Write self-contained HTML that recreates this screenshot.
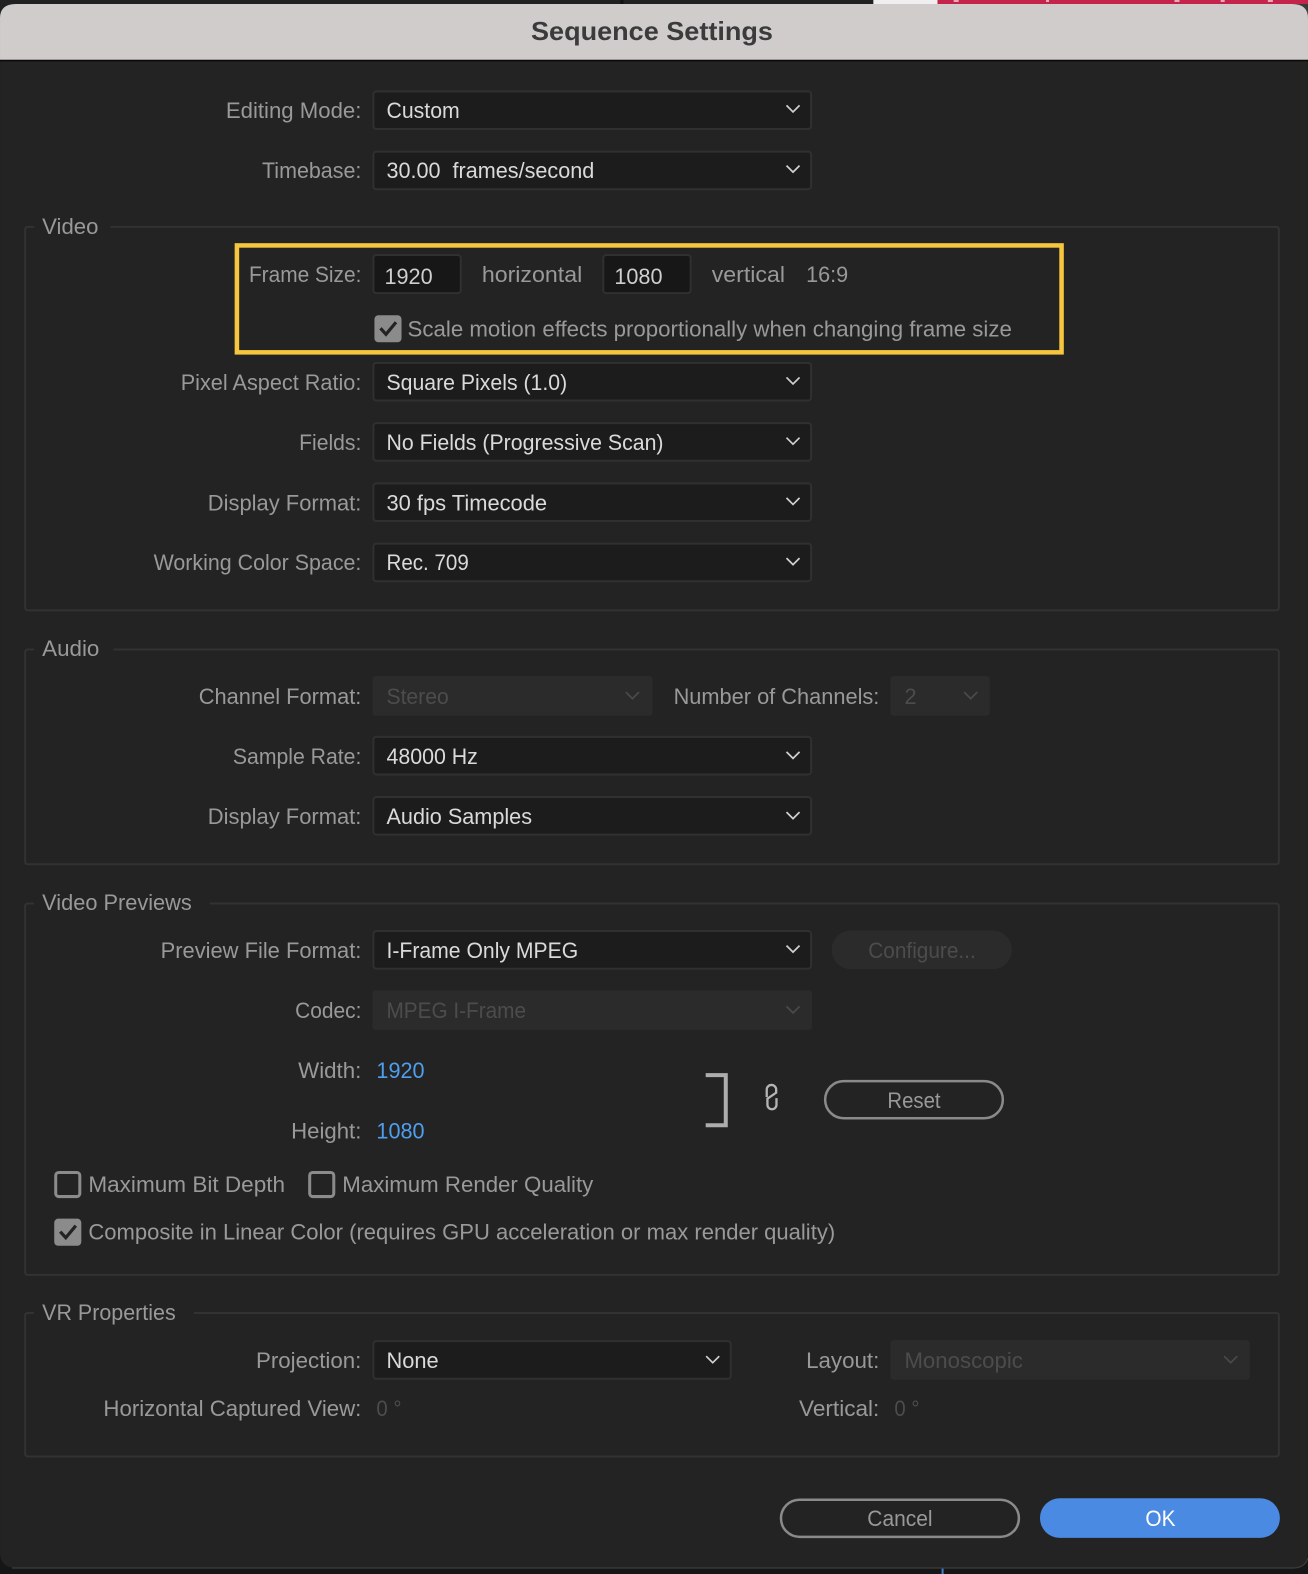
<!DOCTYPE html>
<html lang="en">
<head>
<meta charset="utf-8">
<title>Sequence Settings</title>
<style>
html,body{margin:0;padding:0;width:1308px;height:1574px;overflow:hidden;background:#161616}
svg{display:block}
text{font-family:"Liberation Sans",sans-serif;font-size:22.5px;white-space:pre}
.l{fill:#999}
.v{fill:#dadada}
.d{fill:#4c4c4c}
.b{fill:#4f9fee}
.s{fill:#1c1c1c;stroke:#303030;stroke-width:2}
.o{fill:#2b2b2b}
.g{fill:none;stroke:#323232;stroke-width:2}
.c{fill:none;stroke:#d0d0d0;stroke-width:1.7}
.e{fill:none;stroke:#4a4a4a;stroke-width:1.7}
.k{fill:none;stroke:#232323;stroke-width:3.2}
</style>
</head>
<body>
<svg xmlns="http://www.w3.org/2000/svg" width="1308" height="1574" viewBox="0 0 1303 1568">
<!-- backdrop -->
<rect x="0" y="0" width="1303" height="1568" fill="#161616"/>
<rect x="0" y="0" width="870" height="14" fill="#212121"/>
<rect x="618" y="0" width="3" height="4" fill="#111"/>
<rect x="870" y="0" width="64" height="14" fill="#f0eeee"/>
<rect x="934" y="0" width="369" height="14" fill="#c4234c"/>
<rect x="1284" y="4" width="19" height="16" fill="#3a3a3a"/>
<rect x="950" y="0" width="5" height="2" fill="#e9a9ba"/>
<rect x="1042" y="0" width="3" height="2" fill="#e9a9ba"/>
<rect x="1170" y="0" width="5" height="2" fill="#e9a9ba"/>
<rect x="1216" y="0" width="4" height="2" fill="#e9a9ba"/>
<rect x="1263" y="0" width="5" height="2" fill="#e9a9ba"/>
<rect x="938" y="1561" width="2" height="7" fill="#3f7fd0"/>
<!-- window -->
<path d="M0 18Q0 4 16 4H1287Q1303 4 1303 18V1546Q1303 1562 1287 1562H16Q0 1562 0 1546Z" fill="#232323"/>
<path d="M12 1562H1288Q1300 1562 1303 1552" fill="none" stroke="#3c3c3c" stroke-width="1.2"/>
<path d="M0 18Q0 4 16 4H1287Q1303 4 1303 18V60H0Z" fill="#d0cccc"/>
<rect x="0" y="59.5" width="1303" height="1.6" fill="#0a0a0a"/>
<text x="529" y="40" textLength="241" lengthAdjust="spacingAndGlyphs" font-weight="700" style="font-size:26px;fill:#3b3b3b">Sequence Settings</text>

<!-- group boxes -->
<path d="M34 226H28Q25 226 25 229V605Q25 608 28 608H1271Q1274 608 1274 605V229Q1274 226 1271 226H110" class="g"/>
<path d="M34 647H28Q25 647 25 650V858Q25 861 28 861H1271Q1274 861 1274 858V650Q1274 647 1271 647H113" class="g"/>
<path d="M34 900H28Q25 900 25 903V1267Q25 1270 28 1270H1271Q1274 1270 1274 1267V903Q1274 900 1271 900H209" class="g"/>
<path d="M34 1308H28Q25 1308 25 1311V1448Q25 1451 28 1451H1271Q1274 1451 1274 1448V1311Q1274 1308 1271 1308H193" class="g"/>
<text class="l" x="42" y="233" textLength="56" lengthAdjust="spacingAndGlyphs">Video</text>
<text class="l" x="42" y="653.500" textLength="57" lengthAdjust="spacingAndGlyphs">Audio</text>
<text class="l" x="42" y="906.500" textLength="149" lengthAdjust="spacingAndGlyphs">Video Previews</text>
<text class="l" x="42" y="1315" textLength="133" lengthAdjust="spacingAndGlyphs">VR Properties</text>

<!-- selects -->
<rect class="s" x="372" y="91" width="436" height="37.500" rx="3"/>
<rect class="s" x="372" y="151" width="436" height="37.500" rx="3"/>
<rect class="s" x="372" y="361.500" width="436" height="37.500" rx="3"/>
<rect class="s" x="372" y="421.500" width="436" height="37.500" rx="3"/>
<rect class="s" x="372" y="481.500" width="436" height="37.500" rx="3"/>
<rect class="s" x="372" y="541.500" width="436" height="37.500" rx="3"/>
<rect class="s" x="372" y="734" width="436" height="37.500" rx="3"/>
<rect class="s" x="372" y="794" width="436" height="37.500" rx="3"/>
<rect class="s" x="372" y="927.500" width="436" height="37.500" rx="3"/>
<rect class="s" x="372" y="1336" width="356" height="37.500" rx="3"/>
<rect class="o" x="371" y="673.500" width="279" height="39.500" rx="3"/>
<rect class="o" x="887" y="673.500" width="99" height="39.500" rx="3"/>
<rect class="o" x="371" y="986.500" width="438" height="39.500" rx="3"/>
<rect class="o" x="887" y="1335" width="358" height="39.500" rx="3"/>
<rect x="828.500" y="927" width="179.500" height="38.500" rx="19" fill="#2b2b2b"/>

<!-- chevrons -->
<path class="c" d="M783.500 105l6.500 6.500 6.500-6.500"/>
<path class="c" d="M783.500 165l6.500 6.500 6.500-6.500"/>
<path class="c" d="M783.500 376l6.500 6.500 6.500-6.500"/>
<path class="c" d="M783.500 436l6.500 6.500 6.500-6.500"/>
<path class="c" d="M783.500 496l6.500 6.500 6.500-6.500"/>
<path class="c" d="M783.500 556l6.500 6.500 6.500-6.500"/>
<path class="c" d="M783.500 749l6.500 6.500 6.500-6.500"/>
<path class="c" d="M783.500 809l6.500 6.500 6.500-6.500"/>
<path class="c" d="M783.500 942l6.500 6.500 6.500-6.500"/>
<path class="c" d="M703.500 1351l6.500 6.500 6.500-6.500"/>
<path class="e" d="M623.500 689.500l6.500 6.500 6.500-6.500"/>
<path class="e" d="M960.500 689.500l6.500 6.500 6.500-6.500"/>
<path class="e" d="M783.500 1002.500l6.500 6.500 6.500-6.500"/>
<path class="e" d="M1219.500 1351l6.500 6.500 6.500-6.500"/>

<!-- labels -->
<text class="l" x="225" y="117.500" textLength="135" lengthAdjust="spacingAndGlyphs">Editing Mode:</text>
<text class="l" x="261" y="177.500" textLength="99" lengthAdjust="spacingAndGlyphs">Timebase:</text>
<text class="l" x="248" y="281" textLength="112" lengthAdjust="spacingAndGlyphs">Frame Size:</text>
<text class="l" x="180" y="388.500" textLength="180" lengthAdjust="spacingAndGlyphs">Pixel Aspect Ratio:</text>
<text class="l" x="298" y="448.500" textLength="62" lengthAdjust="spacingAndGlyphs">Fields:</text>
<text class="l" x="207" y="508.500" textLength="153" lengthAdjust="spacingAndGlyphs">Display Format:</text>
<text class="l" x="153" y="568" textLength="207" lengthAdjust="spacingAndGlyphs">Working Color Space:</text>
<text class="l" x="198" y="701.500" textLength="162" lengthAdjust="spacingAndGlyphs">Channel Format:</text>
<text class="l" x="671" y="701.500" textLength="205" lengthAdjust="spacingAndGlyphs">Number of Channels:</text>
<text class="l" x="232" y="761" textLength="128" lengthAdjust="spacingAndGlyphs">Sample Rate:</text>
<text class="l" x="207" y="821" textLength="153" lengthAdjust="spacingAndGlyphs">Display Format:</text>
<text class="l" x="160" y="954.500" textLength="200" lengthAdjust="spacingAndGlyphs">Preview File Format:</text>
<text class="l" x="294" y="1014" textLength="66" lengthAdjust="spacingAndGlyphs">Codec:</text>
<text class="l" x="297" y="1074" textLength="63" lengthAdjust="spacingAndGlyphs">Width:</text>
<text class="l" x="290" y="1134" textLength="70" lengthAdjust="spacingAndGlyphs">Height:</text>
<text class="l" x="255" y="1363" textLength="105" lengthAdjust="spacingAndGlyphs">Projection:</text>
<text class="l" x="803" y="1363" textLength="73" lengthAdjust="spacingAndGlyphs">Layout:</text>
<text class="l" x="103" y="1410.500" textLength="257" lengthAdjust="spacingAndGlyphs">Horizontal Captured View:</text>
<text class="l" x="796" y="1410.500" textLength="80" lengthAdjust="spacingAndGlyphs">Vertical:</text>

<!-- values -->
<text class="v" x="385" y="117.500" textLength="73" lengthAdjust="spacingAndGlyphs">Custom</text>
<text class="v" x="385" y="177.500" textLength="207" lengthAdjust="spacingAndGlyphs">30.00  frames/second</text>
<text class="v" x="385" y="388.500" textLength="180" lengthAdjust="spacingAndGlyphs">Square Pixels (1.0)</text>
<text class="v" x="385" y="448.500" textLength="276" lengthAdjust="spacingAndGlyphs">No Fields (Progressive Scan)</text>
<text class="v" x="385" y="508.500" textLength="160" lengthAdjust="spacingAndGlyphs">30 fps Timecode</text>
<text class="v" x="385" y="568" textLength="82" lengthAdjust="spacingAndGlyphs">Rec. 709</text>
<text class="d" x="385" y="701.500" textLength="62" lengthAdjust="spacingAndGlyphs">Stereo</text>
<text class="d" x="901" y="701.500" textLength="12" lengthAdjust="spacingAndGlyphs">2</text>
<text class="v" x="385" y="761" textLength="91" lengthAdjust="spacingAndGlyphs">48000 Hz</text>
<text class="v" x="385" y="821" textLength="145" lengthAdjust="spacingAndGlyphs">Audio Samples</text>
<text class="v" x="385" y="954.500" textLength="191" lengthAdjust="spacingAndGlyphs">I-Frame Only MPEG</text>
<text class="d" x="385" y="1014" textLength="139" lengthAdjust="spacingAndGlyphs">MPEG I-Frame</text>
<text class="d" x="865" y="954.500" textLength="107" lengthAdjust="spacingAndGlyphs">Configure...</text>
<text class="b" x="375" y="1074" textLength="48" lengthAdjust="spacingAndGlyphs">1920</text>
<text class="b" x="375" y="1134" textLength="48" lengthAdjust="spacingAndGlyphs">1080</text>
<text class="v" x="385" y="1363" textLength="52" lengthAdjust="spacingAndGlyphs">None</text>
<text class="d" x="901" y="1363" textLength="118" lengthAdjust="spacingAndGlyphs">Monoscopic</text>
<text class="d" x="375" y="1410.500" textLength="25" lengthAdjust="spacingAndGlyphs">0 °</text>
<text class="d" x="891" y="1410.500" textLength="25" lengthAdjust="spacingAndGlyphs">0 °</text>

<!-- frame size highlighted block -->
<rect x="236" y="244.500" width="821.500" height="106.500" fill="none" stroke="#f5c63e" stroke-width="4.500"/>
<rect x="372" y="254" width="87" height="38" rx="3" fill="#171717" stroke="#303030" stroke-width="2"/>
<rect x="601" y="254" width="87" height="38" rx="3" fill="#171717" stroke="#303030" stroke-width="2"/>
<text x="383" y="283" textLength="48" lengthAdjust="spacingAndGlyphs" fill="#cfcfcf">1920</text>
<text x="612" y="283" textLength="48" lengthAdjust="spacingAndGlyphs" fill="#cfcfcf">1080</text>
<text class="l" x="480" y="281" textLength="100" lengthAdjust="spacingAndGlyphs">horizontal</text>
<text class="l" x="709" y="281" textLength="73" lengthAdjust="spacingAndGlyphs">vertical</text>
<text class="l" x="803" y="281" textLength="42" lengthAdjust="spacingAndGlyphs">16:9</text>
<rect x="373" y="314" width="27" height="27" rx="4" fill="#8b8b8b"/>
<path class="k" d="M379 327l5.500 6 10-12"/>
<text class="l" x="406" y="335" textLength="602" lengthAdjust="spacingAndGlyphs">Scale motion effects proportionally when changing frame size</text>

<!-- link block -->
<path d="M703 1071H723V1121H703" fill="none" stroke="#adadad" stroke-width="4"/>
<path d="M763.800 1093V1085.500a4.700 4.700 0 0 1 9.400 0V1088.500L764.500 1094.500V1100.500a4.500 4.500 0 0 0 9 0V1094" fill="none" stroke="#b4b4b4" stroke-width="2.300"/>
<rect x="822" y="1077" width="177" height="37" rx="18.500" fill="none" stroke="#8a8a8a" stroke-width="2.500"/>
<text class="l" x="884" y="1104" textLength="53" lengthAdjust="spacingAndGlyphs">Reset</text>

<!-- checkboxes -->
<rect x="55.500" y="1168" width="24" height="24" rx="3" fill="none" stroke="#8b8b8b" stroke-width="3"/>
<rect x="308.500" y="1168" width="24" height="24" rx="3" fill="none" stroke="#8b8b8b" stroke-width="3"/>
<rect x="54" y="1214" width="27" height="27" rx="4" fill="#8b8b8b"/>
<path class="k" d="M60 1227l5.500 6 10-12"/>
<text class="l" x="88" y="1187.500" textLength="196" lengthAdjust="spacingAndGlyphs">Maximum Bit Depth</text>
<text class="l" x="341" y="1187.500" textLength="250" lengthAdjust="spacingAndGlyphs">Maximum Render Quality</text>
<text class="l" x="88" y="1235" textLength="744" lengthAdjust="spacingAndGlyphs">Composite in Linear Color (requires GPU acceleration or max render quality)</text>

<!-- footer buttons -->
<rect x="778" y="1494" width="237" height="37" rx="18.500" fill="none" stroke="#8a8a8a" stroke-width="2.500"/>
<text class="l" x="864" y="1520" textLength="65" lengthAdjust="spacingAndGlyphs">Cancel</text>
<rect x="1036" y="1492.500" width="239" height="39.500" rx="19.700" fill="#4a8ae2"/>
<text x="1141" y="1520" textLength="30" lengthAdjust="spacingAndGlyphs" fill="#fff">OK</text>
</svg>
</body>
</html>
